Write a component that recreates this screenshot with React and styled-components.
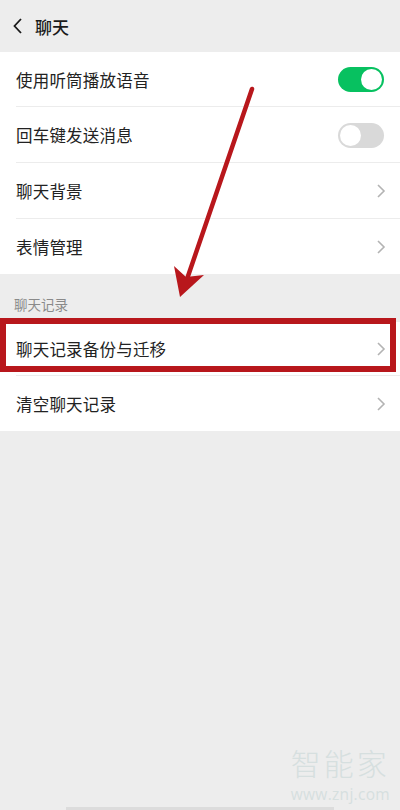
import React from "react";
import styled, { createGlobalStyle } from "styled-components";

const Global = createGlobalStyle`
  html, body { margin: 0; padding: 0; background: #ededed; }
  body { font-family: "Noto Sans CJK SC", "Noto Sans", sans-serif; }
  * { box-sizing: border-box; }
`;

const Page = styled.div`
  position: relative;
  width: 400px;
  height: 810px;
  overflow: hidden;
  background: #ededed;
`;

const Header = styled.div`
  height: 52px;
  display: flex;
  align-items: center;
  padding-left: 12px;
  gap: 11px;
`;

const Title = styled.div`
  font-size: 17px;
  color: #1a1a1a;
  font-weight: 500;
`;

const Group = styled.div`
  background: #fff;
`;

const Row = styled.div`
  position: relative;
  height: ${(p) => p.$h || 55}px;
  display: flex;
  align-items: center;
  justify-content: space-between;
  padding: 0 14px 0 16px;
  &::after {
    content: "";
    display: ${(p) => (p.$last ? "none" : "block")};
    position: absolute;
    left: 16px;
    right: 0;
    bottom: 0;
    height: 1px;
    background: #ececec;
  }
`;

const Label = styled.span`
  font-size: 16.5px;
  color: #222;
  letter-spacing: 0.2px;
`;

const SectionTitle = styled.div`
  height: 48px;
  display: flex;
  align-items: flex-end;
  padding: 0 0 8px 14px;
  font-size: 13.5px;
  color: #8a8a8a;
`;

const Toggle = styled.div`
  width: 46px;
  height: 25px;
  border-radius: 13px;
  background: ${(p) => (p.$on ? "#07c160" : "#d9d9d9")};
  position: relative;
  margin-right: 2px;
  &::before {
    content: "";
    position: absolute;
    top: 2px;
    left: ${(p) => (p.$on ? "23px" : "2px")};
    width: 21px;
    height: 21px;
    border-radius: 50%;
    background: #fff;
  }
`;

const Highlight = styled.div`
  position: absolute;
  left: 0;
  right: 4px;
  top: -4px;
  height: 54px;
  border: 6px solid #b8171c;
  pointer-events: none;
`;

const Arrow = styled.svg`
  position: absolute;
  left: 0;
  top: 0;
  pointer-events: none;
`;

const Watermark = styled.div`
  position: absolute;
  right: 10px;
  top: 740px;
  display: flex;
  flex-direction: column;
  align-items: center;
  color: #d6dfdf;
  font-family: "Noto Sans CJK SC", sans-serif;
`;

const WmBig = styled.div`
  font-size: 30px;
  line-height: 44px;
  letter-spacing: 3px;
  font-weight: 300;
`;

const WmSmall = styled.div`
  font-family: "Open Sans", "Liberation Sans", sans-serif;
  font-size: 15.5px;
  line-height: 21px;
  letter-spacing: 0.3px;
`;

const HomeBar = styled.div`
  position: absolute;
  left: 66px;
  width: 268px;
  bottom: 0;
  height: 3px;
  background: #dcdcdc;
`;

const Chevron = () => (
  <svg width="10" height="16" viewBox="0 0 10 16">
    <path d="M2 2 L8 8 L2 14" fill="none" stroke="#b3b3b3" strokeWidth="1.6" />
  </svg>
);

const Back = () => (
  <svg width="12" height="18" viewBox="0 0 12 18">
    <path d="M9 2 L2.5 9 L9 16" fill="none" stroke="#1a1a1a" strokeWidth="1.8" />
  </svg>
);

export default function App() {
  return (
    <>
      <Global />
      <Page>
        <Header>
          <Back />
          <Title>聊天</Title>
        </Header>
        <Group>
          <Row>
            <Label>使用听筒播放语音</Label>
            <Toggle $on />
          </Row>
          <Row $h={56}>
            <Label>回车键发送消息</Label>
            <Toggle />
          </Row>
          <Row $h={56}>
            <Label>聊天背景</Label>
            <Chevron />
          </Row>
          <Row $last>
            <Label>表情管理</Label>
            <Chevron />
          </Row>
        </Group>
        <SectionTitle>聊天记录</SectionTitle>
        <Group>
          <Row $h={54}>
            <Label>聊天记录备份与迁移</Label>
            <Chevron />
            <Highlight />
          </Row>
          <Row $h={55} $last>
            <Label>清空聊天记录</Label>
            <Chevron />
          </Row>
        </Group>
        <Arrow width="400" height="810" viewBox="0 0 400 810">
          <path d="M252 89 L186 282" stroke="#b8171c" strokeWidth="4.5" strokeLinecap="round" fill="none" />
          <path d="M180 297 L174 266 L186 277 L204 275 Z" fill="#b8171c" />
        </Arrow>
        <Watermark>
          <WmBig>智能家</WmBig>
          <WmSmall>www.znj.com</WmSmall>
        </Watermark>
        <HomeBar />
      </Page>
    </>
  );
}
